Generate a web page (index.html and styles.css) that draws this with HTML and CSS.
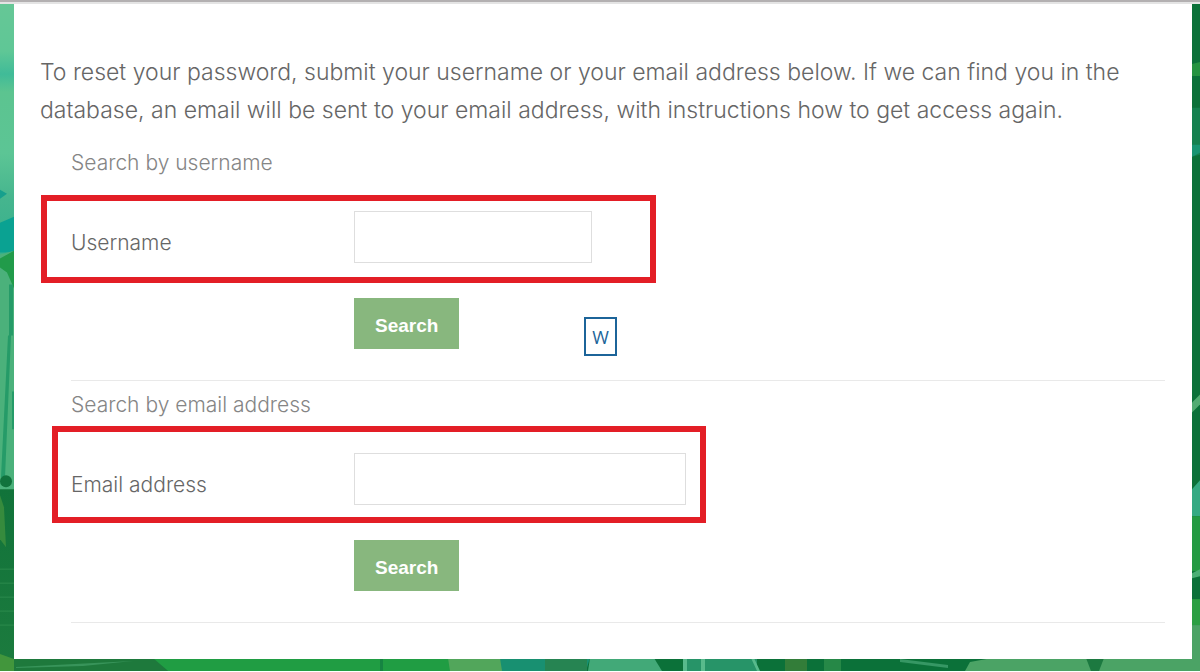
FILE: index.html
```html
<!DOCTYPE html>
<html lang="en">
<head>
<meta charset="utf-8">
<meta name="viewport" content="width=device-width, initial-scale=1">
<title>Forgotten password</title>
<link rel="stylesheet" href="styles.css">
</head>
<body>
<svg class="scenery" viewBox="0 0 1200 672" preserveAspectRatio="none" aria-hidden="true">
  <defs>
    <linearGradient id="sky" x1="0" y1="0" x2="0" y2="1">
      <stop offset="0" stop-color="#66c796"/>
      <stop offset=".2" stop-color="#5fc796"/>
      <stop offset=".29" stop-color="#40bb98"/>
      <stop offset=".36" stop-color="#5cc490"/>
      <stop offset=".6" stop-color="#5cc595"/>
      <stop offset=".78" stop-color="#45b58e"/>
      <stop offset="1" stop-color="#36b08c"/>
    </linearGradient>
    <linearGradient id="ground" x1="0" y1="0" x2="0" y2="1">
      <stop offset="0" stop-color="#11733a"/>
      <stop offset="1" stop-color="#1c7b3e"/>
    </linearGradient>
  </defs>
  <rect width="1200" height="672" fill="#0b7139"/>
  <rect width="14" height="256" fill="url(#sky)"/>
  <path d="M0 190l7 4-7 5z" fill="#16a08d"/>
  <path d="M0 223l14-6v36H0z" fill="#0aa292"/>
  <path d="M0 255l14-4v240H0z" fill="#4bb17b"/>
  <path d="M0 259l14-8v38l-7-16-7-5z" fill="#219b4a"/>
  <path d="M9 285h4v51H9zM8 336h3L5 478H1zM12 392h2v38h-2z" fill="#259b68"/>
  <rect y="490" width="14" height="182" fill="url(#ground)"/>
  <circle cx="6" cy="482" r="6" fill="#11733d"/>
  <path d="M0 496l4 12 2 40-6-8z" fill="#368b3d"/>
  <path d="M0 570h14M0 584h14M0 598h14M0 612h14M0 626h14" stroke="#2b8b4d" stroke-width="1"/>
  <path d="M0 655l14 5 3 12H0z" fill="#42963c"/>
  <path d="M1192 64l8-2v14h-8z" fill="#259340"/>
  <path d="M1192 108h8v47l-8 2z" fill="#14814f"/>
  <path d="M1192 145h8v8l-8 4z" fill="#189572"/>
  <path d="M1192 403l8-8v10l-8 8z" fill="#52ac72"/>
  <path d="M1192 490l8-9v36h-8z" fill="#35aa83"/>
  <path d="M1192 517h8v55h-8z" fill="#249a43"/>
  <path d="M1192 574l8-4v7l-8 2z" fill="#4caf75"/>
  <path d="M1192 600h8v26h-8z" fill="#2b9f43"/>
  <path d="M1192 626h8v46h-8z" fill="#4ba365"/>
  <path d="M14 659h140l14 13H14z" fill="#1e793c"/>
  <path d="M16 668l117-6-50 5-67 2z" fill="#38945a"/>
  <path d="M153 659h297v13H168z" fill="#209d43"/>
  <path d="M380 659h3v13h-3z" fill="#168442"/>
  <path d="M448 659h54v13h-52z" fill="#52a65b"/>
  <path d="M500 659h90l-4 13h-84z" fill="#189071"/>
  <path d="M545 659h42v13h-42z" fill="#268452"/>
  <path d="M590 659h64l8 13h-74z" fill="#42a978"/>
  <path d="M683 659h74v13h-74z" fill="#279468"/>
  <path d="M683 659h4v13h-4zM701 659h4v13h-4zM751 659h3l6 13h-3z" fill="#58ba8c"/>
  <path d="M785 659h22v13h-22z" fill="#337d39"/>
  <path d="M824 659h17v13h-17z" fill="#268847"/>
  <path d="M900 660l48 6v3l-48-6z" fill="#369764"/>
  <path d="M970 663l22-4h200v13H965z" fill="#4ba365"/>
  <path d="M1086 659h18l-5 13h-8z" fill="#1c7940"/>
</svg>
<main class="card">
  <p class="intro">To reset your password, submit your username or your email address below. If we can find you in the database, an email will be sent to your email address, with instructions how to get access again.</p>
  <form class="search-form">
    <fieldset class="group">
      <legend class="group-title">Search by username</legend>
      <div class="field field-username">
        <label for="username">Username</label>
        <input class="text-input short" id="username" name="username" type="text">
      </div>
      <div class="actions">
        <button class="search-button" type="submit">Search</button>
        <span class="badge">W</span>
      </div>
    </fieldset>
    <fieldset class="group">
      <legend class="group-title">Search by email address</legend>
      <div class="field field-email">
        <label for="email">Email address</label>
        <input class="text-input" id="email" name="email" type="email">
      </div>
      <div class="actions">
        <button class="search-button" type="submit">Search</button>
      </div>
    </fieldset>
  </form>
</main>
</body>
</html>
```
FILE: styles.css
```css
*,
*::before,
*::after {
  box-sizing: border-box;
}

body {
  position: relative;
  margin: 0;
  padding: 4px 8px 13px 14px;
  color: #666;
  font-family: "Century Gothic", Inter, sans-serif;
  font-size: 21px;
  font-weight: 300;
}

body::before {
  content: "";
  position: absolute;
  inset: 0 0 auto;
  height: 4px;
  border-bottom: 2px solid #e4e4e4;
  background: #b3b0b1;
}

.scenery {
  position: absolute;
  inset: 0;
  z-index: -1;
  width: 100%;
  height: 100%;
  border-bottom: 1px solid #fff;
}

.card {
  padding: 49px 27px 36px 26px;
  background: #fff;
}

.intro {
  margin: 0 0 10px;
  font-size: 23px;
  line-height: 38px;
}

.search-form {
  padding-left: 31px;
}

.group {
  min-width: 0;
  margin: 0;
  padding: 0;
  border: 0;
  border-bottom: 1px solid #e9e9e9;
}

.group-title {
  margin-bottom: 24px;
  padding: 0;
  color: #858585;
  line-height: 48px;
}

.field {
  position: relative;
  display: grid;
  grid-template-columns: 283px 1fr;
  align-items: center;
}

.field label {
  padding-top: 10px;
}

/* Red frames drawn around the fields that need attention */
.field::after {
  content: "";
  position: absolute;
  border: 6px solid #e31e26;
  pointer-events: none;
}

.field-username::after {
  top: -16px;
  left: -30px;
  width: 615px;
  height: 88px;
}

.field-email::after {
  top: -27px;
  left: -19px;
  width: 654px;
  height: 97px;
}

.text-input {
  width: 332px;
  height: 52px;
  padding: 0 12px;
  border: 1px solid #dedede;
  background: #fff;
  color: inherit;
  font: inherit;
}

.text-input.short {
  width: 238px;
}

.actions {
  position: relative;
  padding: 35px 0 31px 283px;
}

.search-button {
  display: block;
  height: 51px;
  padding: 4px 21px 0;
  border: 0;
  background: #88b77e;
  color: #fff;
  font: bold 19px "Liberation Sans", Arial, sans-serif;
}

.badge {
  position: absolute;
  top: 54px;
  left: 513px;
  width: 33px;
  height: 39px;
  border: 2px solid #1c6499;
  color: #1c6499;
  font: 18px/36px "Open Sans", sans-serif;
  text-align: center;
}
```
